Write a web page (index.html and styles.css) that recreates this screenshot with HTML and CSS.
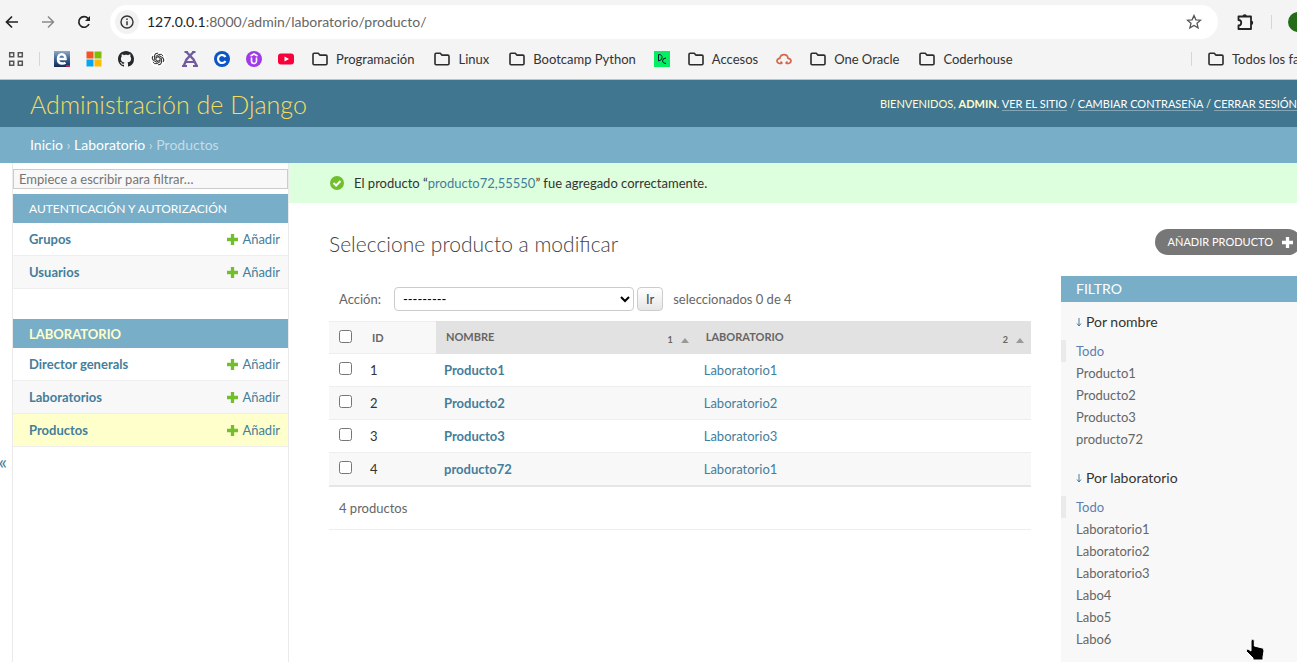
FILE: index.html
```html
<!DOCTYPE html>
<html lang="es">
<head>
<meta charset="utf-8">
<title>Seleccione producto a modificar | Administración de Django</title>
<link rel="stylesheet" href="styles.css">
</head>
<body>
<svg class="defs" aria-hidden="true">
  <symbol id="folder" viewBox="0 0 16 16"><path d="M1 12.6V3.4Q1 2.3 2.1 2.3H6.2L8 4.1H13.9Q15 4.1 15 5.2V12.6Q15 13.7 13.9 13.7H2.1Q1 13.7 1 12.6Z" fill="none" stroke="#2b2b2b" stroke-width="1.6"/></symbol>
  <symbol id="plus" viewBox="0 0 10 10"><path d="M3.5 0h3v3.5H10v3H6.5V10h-3V6.5H0v-3h3.5z" fill="currentColor"/></symbol>
</svg>
<div class="window">
  <div class="browser">
    <div class="toolbar">
      <button class="nav" aria-label="Atrás"><svg viewBox="0 0 16 16"><path d="M14 8H3M8 2.5L2.5 8 8 13.500" fill="none" stroke="#222" stroke-width="1.7"/></svg></button>
      <button class="nav" aria-label="Adelante"><svg viewBox="0 0 16 16"><path d="M2 8h11M8 2.500L13.500 8 8 13.500" fill="none" stroke="#8a8a8a" stroke-width="1.500"/></svg></button>
      <button class="nav" aria-label="Recargar"><svg viewBox="0 0 16 16"><path d="M13 10A5.300 5.300 0 1 1 12 4.300L13.500 6" fill="none" stroke="#222" stroke-width="1.700"/><path d="M14 2v5H9z" fill="#222"/></svg></button>
      <div class="address">
        <span class="info"><svg viewBox="0 0 16 16"><circle cx="8" cy="8" r="6" fill="none" stroke="#333" stroke-width="1.400"/><path d="M8 7.200v4M8 4.600v1.500" stroke="#333" stroke-width="1.500"/></svg></span>
        <span class="url"><b>127.0.0.1</b>:8000/admin/laboratorio/producto/</span>
        <button class="nav star" aria-label="Favorito"><svg viewBox="0 0 16 16"><path d="M8 1.500l1.900 4.300 4.700.4-3.600 3.100 1.100 4.600L8 11.500l-4.100 2.400L5 9.300 1.400 6.200l4.700-.4z" fill="none" stroke="#555" stroke-width="1.300"/></svg></button>
      </div>
      <button class="nav ext" aria-label="Extensiones"><svg viewBox="0 0 18 18"><path d="M2.500 3.500H15V16H2.500V12.500a2.300 2.300 0 0 0 0-5.500z" fill="none" stroke="#222" stroke-width="1.800" stroke-linejoin="round"/><path d="M6.500 3.500a2.200 2.200 0 0 1 4.400 0zM15 7.500a2.200 2.200 0 0 1 0 4.400z" fill="#222"/></svg></button>
      <span class="sep"></span>
      <span class="avatar"></span>
    </div>
    <div class="bookmarks">
      <svg class="ico" viewBox="0 0 16 16"><path d="M1.700 1.700h4v4h-4zM10.300 1.700h4v4h-4zM1.700 10.300h4v4h-4zM10.300 10.300h4v4h-4z" fill="none" stroke="#555" stroke-width="1.500"/></svg>
      <span class="sep"></span>
      <svg class="ico" viewBox="0 0 16 16"><defs><linearGradient id="eg" x2="0" y2="1"><stop stop-color="#91a9c5"/><stop offset=".5" stop-color="#3b6395"/><stop offset="1" stop-color="#142951"/></linearGradient></defs><path d="M0 0h16v16H0z" fill="url(#eg)"/><path d="M12 14h4v2h-4z" fill="#b2284c"/><path d="M4 8h7.500C11.500 1.500 4 1.500 4 8q0 4.500 4.200 4.500 2 0 3.300-.8" fill="none" stroke="#fff" stroke-width="2.500"/></svg>
      <svg class="ico" viewBox="0 0 16 16"><path d="M.5.500h7v7h-7z" fill="#f35325"/><path d="M8.500.500h7v7h-7z" fill="#81bc06"/><path d="M.5 8.500h7v7h-7z" fill="#05a6f0"/><path d="M8.500 8.500h7v7h-7z" fill="#ffba08"/></svg>
      <svg class="ico" viewBox="0 0 16 16"><path fill="#24292e" d="M8 0C3.580 0 0 3.580 0 8c0 3.540 2.290 6.530 5.470 7.590.4.070.55-.17.550-.38 0-.19-.01-.82-.01-1.490-2.010.37-2.530-.49-2.690-.94-.09-.23-.48-.94-.82-1.130-.28-.15-.68-.52-.01-.53.630-.01 1.080.58 1.230.82.720 1.210 1.870.87 2.330.66.070-.52.280-.87.510-1.070-1.780-.2-3.640-.89-3.640-3.950 0-.87.310-1.590.82-2.150-.08-.2-.36-1.020.08-2.120 0 0 .67-.21 2.200.82.640-.18 1.320-.27 2-.27s1.360.09 2 .27c1.530-1.040 2.200-.82 2.200-.82.440 1.100.16 1.920.08 2.120.51.560.82 1.270.82 2.150 0 3.070-1.870 3.750-3.650 3.950.29.250.54.730.54 1.480 0 1.070-.01 1.930-.01 2.200 0 .21.150.46.550.38A8 8 0 0 0 16 8c0-4.420-3.580-8-8-8z"/></svg>
      <svg class="ico" viewBox="0 0 16 16"><circle cx="8" cy="8" r="8" fill="#fff"/><g fill="none" stroke="#333" stroke-width="1"><path id="petal" d="M6 8.900V5.200L9 3.400q3-1 4 1.800"/><use href="#petal" transform="rotate(60 8 8)"/><use href="#petal" transform="rotate(120 8 8)"/><use href="#petal" transform="rotate(180 8 8)"/><use href="#petal" transform="rotate(240 8 8)"/><use href="#petal" transform="rotate(300 8 8)"/></g></svg>
      <svg class="ico" viewBox="0 0 16 16"><g fill="none" stroke="#705ba0"><path d="M4.500 1l7 7.500L15 15.500M11.500 1l-7 7.500L1.500 15.500" stroke-width="2.400"/><path d="M2.500 1h3.500M10 1h3.500M0 15h5M11 15h5M3.500 11h9" stroke-width="2"/></g></svg>
      <svg class="ico" viewBox="0 0 16 16"><circle cx="8" cy="8" r="8" fill="#0c55c7"/><path d="M11.500 6A4 4 0 1 0 11.500 10" fill="none" stroke="#fff" stroke-width="2.200"/></svg>
      <svg class="ico" viewBox="0 0 16 16"><circle cx="8" cy="8" r="8" fill="#a13bea"/><path d="M4.500 5L8 3l3.500 2M5.500 6.500V10a2.500 2.500 0 0 0 5 0V6.500" fill="none" stroke="#fff" stroke-width="1.600"/></svg>
      <svg class="ico" viewBox="0 0 16 16"><rect y="2.500" width="16" height="11" rx="3" fill="#f8003a"/><path d="M6.500 5.500v5L11 8z" fill="#fff"/></svg>
      <a class="folder" href="#"><svg class="ico"><use href="#folder"/></svg>Programación</a>
      <a class="folder" href="#"><svg class="ico"><use href="#folder"/></svg>Linux</a>
      <a class="folder" href="#"><svg class="ico"><use href="#folder"/></svg>Bootcamp Python</a>
      <svg class="ico" viewBox="0 0 16 16"><path d="M0 0h16v16H0z" fill="#03ef62"/><path d="M4.500 10V3.500q4 0 3.500 3.500-.5 2.500-3.500 3M12 7q-3.500 0-3.500 3 .3 2.500 3.500 2.500" fill="none" stroke="#05192d"/></svg>
      <a class="folder" href="#"><svg class="ico"><use href="#folder"/></svg>Accesos</a>
      <svg class="ico" viewBox="0 0 16 16"><path d="M6 12.500H3.500Q1 12 1 9.800 1.200 7.500 3.800 7.300 4.500 3.700 8 3.700t4 3.600q2.800.2 3 2.500 0 2.200-2.500 2.700H10M4.500 10.500l2 2M11.500 10.500l-2 2" fill="none" stroke="#d5674c" stroke-width="1.700"/></svg>
      <a class="folder" href="#"><svg class="ico"><use href="#folder"/></svg>One Oracle</a>
      <a class="folder" href="#"><svg class="ico"><use href="#folder"/></svg>Coderhouse</a>
      <div class="all"><span class="sep"></span><a class="folder" href="#"><svg class="ico"><use href="#folder"/></svg>Todos los favoritos</a></div>
    </div>
  </div>

  <div class="page">
    <header class="header">
      <h1>Administración de Django</h1>
      <div class="user">Bienvenidos, <strong>admin</strong>. <a href="#">Ver el sitio</a> / <a href="#">Cambiar contraseña</a> / <a href="#">Cerrar sesión</a></div>
    </header>
    <nav class="crumbs"><a href="#">Inicio</a> › <a href="#">Laboratorio</a> › Productos</nav>
    <div class="main">
      <button class="toggle" aria-label="Alternar navegación">«</button>
      <nav class="sidebar">
        <input class="filter" type="search" placeholder="Empiece a escribir para filtrar…" aria-label="Filtrar navegación">
        <section class="module">
          <h2>Autenticación y autorización</h2>
          <div class="model"><a href="#">Grupos</a><a class="add" href="#"><svg><use href="#plus"/></svg>Añadir</a></div>
          <div class="model"><a href="#">Usuarios</a><a class="add" href="#"><svg><use href="#plus"/></svg>Añadir</a></div>
        </section>
        <section class="module current">
          <h2>Laboratorio</h2>
          <div class="model"><a href="#">Director generals</a><a class="add" href="#"><svg><use href="#plus"/></svg>Añadir</a></div>
          <div class="model"><a href="#">Laboratorios</a><a class="add" href="#"><svg><use href="#plus"/></svg>Añadir</a></div>
          <div class="model active"><a href="#">Productos</a><a class="add" href="#"><svg><use href="#plus"/></svg>Añadir</a></div>
        </section>
      </nav>
      <main class="content">
        <div class="message"><svg viewBox="0 0 14 14"><circle cx="7" cy="7" r="7" fill="#70bf2b"/><path d="M3.500 7l2.600 2.500L10.500 5" fill="none" stroke="#fff" stroke-width="2"/></svg><span>El producto “<a href="#">producto72,55550</a>” fue agregado correctamente.</span></div>
        <div class="titlebar"><h2>Seleccione producto a modificar</h2><a class="addbtn" href="#">Añadir producto<svg><use href="#plus"/></svg></a></div>
        <div class="columns">
          <form class="results">
            <div class="actions"><label for="action">Acción:</label><select id="action"><option>---------</option></select><button type="button">Ir</button><span>seleccionados 0 de 4</span></div>
            <table>
              <colgroup><col class="c-check"><col class="c-id"><col class="c-name"><col></colgroup>
              <thead><tr><th><input type="checkbox" aria-label="Seleccionar todo"></th><th>ID</th>
                <th class="sorted"><div><span>Nombre</span><small>1<i></i></small></div></th>
                <th class="sorted"><div><span>Laboratorio</span><small>2<i></i></small></div></th></tr></thead>
              <tbody>
                <tr><td><input type="checkbox" aria-label="Producto1"></td><td>1</td><td><a class="name" href="#">Producto1</a></td><td><a href="#">Laboratorio1</a></td></tr>
                <tr><td><input type="checkbox" aria-label="Producto2"></td><td>2</td><td><a class="name" href="#">Producto2</a></td><td><a href="#">Laboratorio2</a></td></tr>
                <tr><td><input type="checkbox" aria-label="Producto3"></td><td>3</td><td><a class="name" href="#">Producto3</a></td><td><a href="#">Laboratorio3</a></td></tr>
                <tr><td><input type="checkbox" aria-label="producto72"></td><td>4</td><td><a class="name" href="#">producto72</a></td><td><a href="#">Laboratorio1</a></td></tr>
              </tbody>
            </table>
            <p class="count">4 productos</p>
          </form>
          <aside class="filters">
            <h2>Filtro</h2>
            <h3><svg viewBox="0 0 6 10"><path d="M3 1v8M1 6.500L3 9l2-2.500" fill="none" stroke="#447e9b"/></svg>Por nombre</h3>
            <ul><li class="selected"><a href="#">Todo</a></li><li><a href="#">Producto1</a></li><li><a href="#">Producto2</a></li><li><a href="#">Producto3</a></li><li><a href="#">producto72</a></li></ul>
            <h3><svg viewBox="0 0 6 10"><path d="M3 1v8M1 6.500L3 9l2-2.500" fill="none" stroke="#447e9b"/></svg>Por laboratorio</h3>
            <ul><li class="selected"><a href="#">Todo</a></li><li><a href="#">Laboratorio1</a></li><li><a href="#">Laboratorio2</a></li><li><a href="#">Laboratorio3</a></li><li><a href="#">Labo4</a></li><li><a href="#">Labo5</a></li><li><a href="#">Labo6</a></li></ul>
          </aside>
        </div>
      </main>
    </div>
  </div>
  <svg class="cursor" viewBox="0 0 20 23"><path d="M6 2.500Q7.800 0 9.300 2.500V8l8 2Q19 10.500 19 13l-1 6v3H8v-2L1.500 13.500Q.5 11 3 11l3 2z" fill="#000" stroke="#fff"/></svg>
</div>
</body>
</html>
```
FILE: styles.css
```css
* { box-sizing: border-box; }
body { margin: 0; background: #fff; color: #333; font: 13px/16px Lato, "Open Sans", sans-serif; }
h1, h2, h3, p, ul { margin: 0; padding: 0; font-weight: 400; }
ul { list-style: none; }
a { color: #447e9b; text-decoration: none; }
button, input, select { font-family: inherit; font-size: 13px; }
.defs { position: absolute; width: 0; height: 0; }
.window { position: relative; display: flex; flex-direction: column; height: 100vh; overflow: hidden; }

.browser { flex: none; background: #f4f4f4; border-bottom: 1px solid #b9c4cc; }
.toolbar { display: flex; align-items: center; height: 44px; padding-left: 4px; gap: 20px; }
.nav { flex: none; width: 16px; height: 16px; padding: 0; border: 0; background: none; }
.nav svg { display: block; width: 100%; height: 100%; }
.address { display: flex; flex: 1; align-items: center; gap: 8px; height: 34px; margin: 0 -2px; padding: 0 16px 0 5px; border-radius: 17px; background: #fff; }
.info { display: grid; place-items: center; width: 24px; height: 24px; border-radius: 12px; background: #f2f2f2; }
.info svg { width: 16px; height: 16px; }
.url { flex: 1; font-size: 14px; color: #666; }
.url b { font-weight: 400; color: #222; }
.ext { width: 18px; height: 18px; }
.sep { flex: none; width: 1px; height: 14px; background: #d6d6d6; }
.avatar { flex: none; width: 20px; height: 20px; margin: 0 -11px 0 -4px; border-radius: 10px; background: #256b18; }
.toolbar > .sep { margin-left: -3px; }
.bookmarks { display: flex; align-items: center; gap: 16px; height: 35px; padding: 0 0 5px 8px; white-space: nowrap; }
.bookmarks > .sep { margin: 0 -2px 0 -1px; }
.ico { flex: none; width: 16px; height: 16px; }
.folder { display: flex; align-items: center; gap: 8px; margin: 0 2px; color: #333; }
.all { display: flex; align-items: center; gap: 14px; width: 106px; margin-left: auto; overflow: hidden; }

.page { display: flex; flex: 1; flex-direction: column; margin-right: -4px; }
.header { display: flex; align-items: center; justify-content: space-between; height: 47px; padding: 0 4px 0 30px; background: #417690; color: #ffc; white-space: nowrap; }
.header h1 { font-size: 25px; line-height: 28px; font-weight: 300; color: #f5dd5d; }
.user { font-size: 11px; text-transform: uppercase; }
.user a { color: #fff; border-bottom: 1px solid #84a5b5; }
.crumbs { height: 36px; padding: 10px 30px; background: #79aec8; color: #c4dce8; font-size: 14px; line-height: 16px; }
.crumbs a { color: #fff; }
.main { display: flex; flex: 1; }
.toggle { display: flex; align-items: center; justify-content: flex-end; flex: none; width: 12px; height: 596px; padding: 0 5px 0 0; border: 0; background: none; color: #447e9b; font-size: 20px; }

.sidebar { flex: none; width: 277px; padding-top: 6px; border: solid #eaeaea; border-width: 0 1px; }
.filter { display: block; width: 100%; height: 20px; padding: 0 5px; border: 1px solid #ccc; border-radius: 0; background: #f8f8f8; color: #333; }
.filter::placeholder { color: #757575; }
.module { margin: 5px 0 30px; }
.module h2 { height: 29px; padding: 7px 16px; background: #79aec8; color: #fff; font-size: 12px; text-transform: uppercase; }
.current h2 { color: #ffc; font-weight: 700; font-size: 13px; }
.model { display: flex; justify-content: space-between; padding: 8px 8px 8px 16px; border-bottom: 1px solid #eee; font-weight: 700; }
.model:nth-of-type(even) { background: #f8f8f8; }
.model.active { background: #ffc; }
.add { display: flex; align-items: center; gap: 4px; font-weight: 400; }
.add svg { width: 11px; height: 11px; color: #70bf2b; }

.content { flex: 1; min-width: 0; }
.message { display: flex; align-items: center; gap: 10px; height: 40px; padding-left: 41px; background: #dfd; }
.message svg { width: 14px; height: 14px; }
.titlebar { display: flex; align-items: flex-start; justify-content: space-between; height: 73px; padding: 26px 0 0 40px; }
.titlebar h2 { padding-top: 3px; font-size: 21px; line-height: 24px; font-weight: 300; color: #444; }
.addbtn { display: flex; align-items: center; gap: 9px; height: 26px; padding: 0 8px 0 13px; border-radius: 13px; background: #777; color: #fff; font-size: 11px; text-transform: uppercase; }
.addbtn svg { width: 11px; height: 11px; }
.columns { display: flex; gap: 30px; padding-left: 40px; }
.results { flex: 1; min-width: 0; color: #666; }
.actions { display: flex; align-items: center; height: 45px; padding-left: 10px; }
.actions label { margin-right: 13px; }
.actions select { width: 240px; height: 24px; padding: 0 4px; border: 1px solid #ccc; border-radius: 4px; background: #fff; color: #000; }
.actions button { height: 24px; margin: 0 10px 0 3px; padding: 0 8px; border: 1px solid #ccc; border-radius: 4px; background: linear-gradient(#fff, #e6e6e6); color: #444; }

table { width: 100%; border-collapse: collapse; table-layout: fixed; }
.c-check { width: 33px; }
.c-id { width: 74px; }
.c-name { width: 37%; }
th { height: 32px; padding: 0 10px; border: solid #eee; border-width: 1px 0; background: #f8f8f8; text-align: left; font-size: 11px; text-transform: uppercase; color: #666; }
th.sorted { background: #e2e2e2; border-color: #e2e2e2; }
th div { display: flex; justify-content: space-between; margin-right: -3px; }
th small { display: flex; align-items: center; gap: 8px; padding-top: 5px; font-size: 9px; line-height: 12px; }
th i { border: solid transparent; border-width: 0 4px 5px; border-bottom-color: #999; }
td { height: 33px; padding: 0 8px; border-bottom: 1px solid #eee; color: #333; }
th:first-child, td:first-child { padding: 0 10px; }
th input, td input { display: block; width: 13px; height: 13px; margin: 0 0 3px; }
tbody tr:nth-child(even) { background: #f8f8f8; }
tbody tr:last-child td { border-bottom: 2px solid #e6e6e6; }
.name { font-weight: 700; }
.count { padding: 13px 10px; border-bottom: 1px solid #eee; }

.filters { flex: none; width: 240px; min-height: 386px; background: #f8f8f8; }
.filters h2 { height: 26px; padding: 5px 15px; background: #79aec8; color: #fff; font-size: 14px; text-transform: uppercase; }
.filters h3 { display: flex; align-items: center; gap: 4px; padding: 12px 15px 10px; font-size: 14px; }
.filters h3 svg { width: 6px; height: 10px; }
.filters ul { padding: 0 15px 8px; }
.filters li { height: 22px; padding: 3px 0; }
.filters li a { color: #666; }
.filters .selected { margin-left: -15px; padding-left: 10px; border-left: 5px solid #eaeaea; }
.filters .selected a { color: #5b80b2; }
.cursor { position: absolute; right: 32px; bottom: 1px; width: 20px; height: 23px; }
```
